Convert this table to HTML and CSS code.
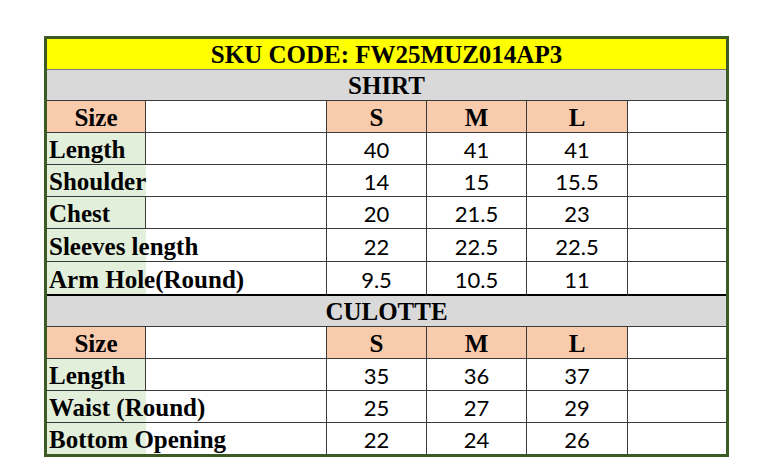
FILE: index.html
```html
<!DOCTYPE html>
<html lang="en">
<head>
<meta charset="utf-8">
<title>Size Chart FW25MUZ014AP3</title>
<link rel="stylesheet" href="styles.css">
</head>
<body>
<div class="page">
  <table class="sheet">
    <colgroup>
      <col class="c-label">
      <col class="c-blank">
      <col class="c-size">
      <col class="c-size">
      <col class="c-size-l">
      <col class="c-end">
    </colgroup>
    <tbody>
      <tr class="r-title"><td class="title" colspan="6">SKU CODE: FW25MUZ014AP3</td></tr>
      <tr class="r-section"><td class="section" colspan="6">SHIRT</td></tr>
      <tr class="r-std"><td class="head lbl-b">Size</td><td class="blank"></td><td class="head">S</td><td class="head">M</td><td class="head">L</td><td class="end"></td></tr>
      <tr class="r-std"><td class="lbl lbl-b">Length</td><td class="blank"></td><td class="num">40</td><td class="num">41</td><td class="num">41</td><td class="end"></td></tr>
      <tr class="r-std"><td class="lbl">Shoulder</td><td class="blank"></td><td class="num">14</td><td class="num">15</td><td class="num">15.5</td><td class="end"></td></tr>
      <tr class="r-std"><td class="lbl lbl-b">Chest</td><td class="blank"></td><td class="num">20</td><td class="num">21.5</td><td class="num">23</td><td class="end"></td></tr>
      <tr class="r-tall"><td class="lbl">Sleeves length</td><td class="blank"></td><td class="num">22</td><td class="num">22.5</td><td class="num">22.5</td><td class="end"></td></tr>
      <tr class="r-std r-last"><td class="lbl">Arm Hole(Round)</td><td class="blank"></td><td class="num">9.5</td><td class="num">10.5</td><td class="num">11</td><td class="end"></td></tr>
      <tr class="r-section"><td class="section" colspan="6">CULOTTE</td></tr>
      <tr class="r-std"><td class="head lbl-b">Size</td><td class="blank"></td><td class="head">S</td><td class="head">M</td><td class="head">L</td><td class="end"></td></tr>
      <tr class="r-std"><td class="lbl lbl-b">Length</td><td class="blank"></td><td class="num">35</td><td class="num">36</td><td class="num">37</td><td class="end"></td></tr>
      <tr class="r-std"><td class="lbl">Waist (Round)</td><td class="blank"></td><td class="num">25</td><td class="num">27</td><td class="num">29</td><td class="end"></td></tr>
      <tr class="r-final"><td class="lbl">Bottom Opening</td><td class="blank"></td><td class="num">22</td><td class="num">24</td><td class="num">26</td><td class="end"></td></tr>
    </tbody>
  </table>
</div>
</body>
</html>
```

FILE: styles.css
```css
html, body {
  margin: 0;
  padding: 0;
  background: #ffffff;
}

.page {
  padding: 36px 0 0 44px;
}

.sheet {
  border-collapse: separate;
  border-spacing: 0;
  table-layout: fixed;
  width: 685px;
  border: 3px solid #3b5a24;
  font-family: "Liberation Serif", "Times New Roman", serif;
  color: #000;
}

.c-label { width: 99px; }
.c-blank { width: 181px; }
.c-size { width: 100px; }
.c-size-l { width: 101px; }
.c-end { width: 98px; }

.sheet td {
  padding: 0;
  box-sizing: border-box;
  border-bottom: 1px solid #3a3a3a;
  border-right: 1px solid #3a3a3a;
  vertical-align: bottom;
  line-height: 28px;
  white-space: nowrap;
  overflow: visible;
  font-size: 25px;
}

.sheet td.end { border-right: none; background: #fff; }

.r-title { height: 31px; }
.r-section { height: 31px; }
.r-std { height: 32px; }
.r-tall { height: 33px; }
.r-final { height: 31px; }

.r-last td { border-bottom: 2px solid #000; }
.r-last { height: 34px; }
.r-final td { border-bottom: none; }

.title {
  background: #ffff00;
  font-weight: bold;
  text-align: center;
  border-right: none !important;
  border-bottom-color: #7a7a7a !important;
}

.section {
  background: #d9d9d9;
  font-weight: bold;
  text-align: center;
  border-right: none !important;
}

.head {
  background: #f8cbad;
  font-weight: bold;
  text-align: center;
}

.sheet td.lbl {
  background: #e2efda;
  font-weight: bold;
  text-align: left;
  padding-left: 2px;
  border-right: none;
}

.sheet td.lbl-b { border-right: 1px solid #3a3a3a; }

.blank { background: #fff; }

.num {
  background: #fff;
  font-family: "Lato", "Liberation Sans", sans-serif;
  font-size: 22px !important;
  text-align: center;
}
```
